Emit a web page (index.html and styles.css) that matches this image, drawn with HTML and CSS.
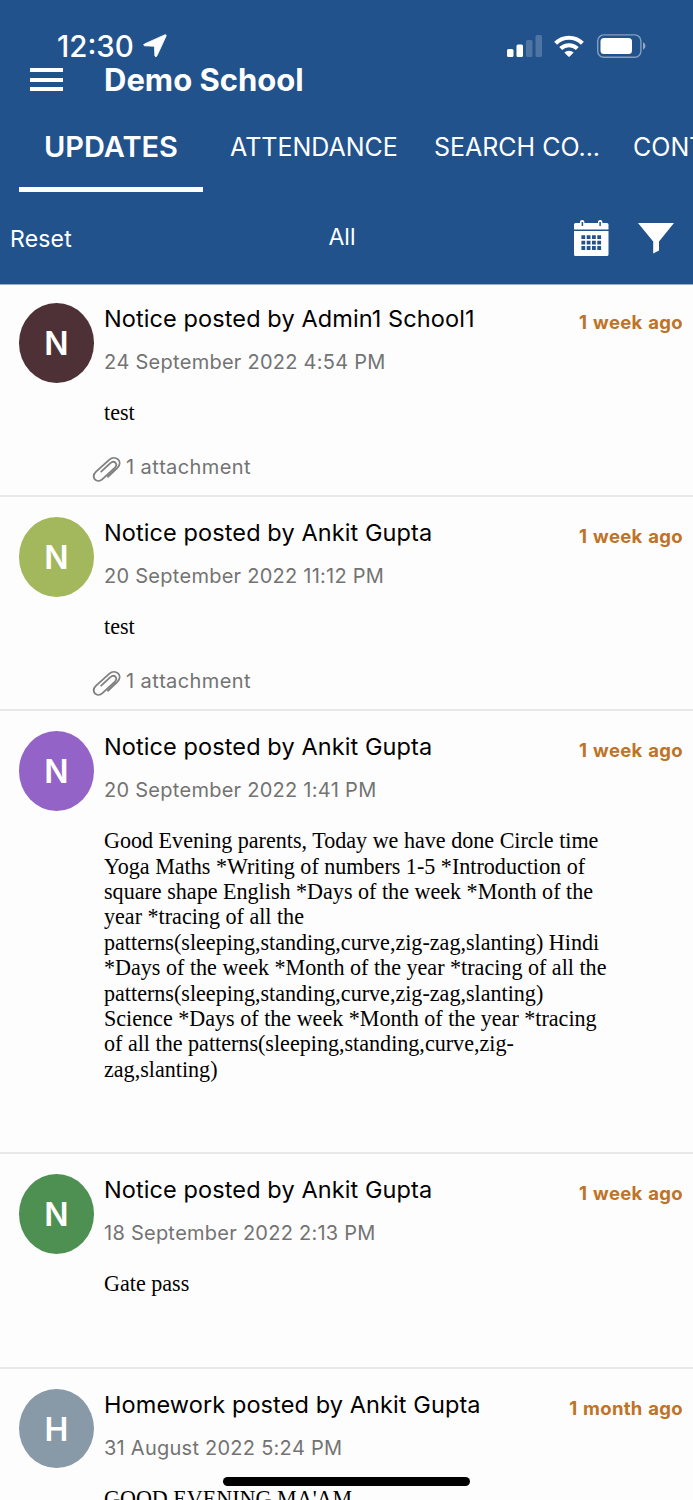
FILE: index.html
```html
<!DOCTYPE html>
<html>
<head>
  <meta charset="utf-8">
  <meta name="viewport" content="width=device-width, initial-scale=1">
  <title>Demo School</title>
  <link rel="stylesheet" href="styles.css">
</head>
<body>
  <svg width="0" height="0" class="defs">
    <symbol id="clip" viewBox="0 0 30 28">
      <g fill="none" stroke="#808080" stroke-width="1.9" stroke-linecap="round">
        <path d="M16.500 21.500L26.300 12.300C29.500 9 29 5.500 27 3.500C24.500 1.300 20.800 1.300 18 3.800L4.200 16.200C1.500 18.800 1.200 22 3 24.300C5 26.500 8.300 26.200 10.800 24L23.500 12.300C25.500 10.300 25.500 8.300 24.300 7C23 5.700 20.800 5.900 19 7.400L9.500 16.200"/>
      </g>
    </symbol>
  </svg>

  <header>
    <div class="status-bar">
      <div class="clock">
        <span class="time">12:30</span>
        <svg width="24" height="24" viewBox="0 0 24 24"><path fill="#fff" stroke="#fff" stroke-width=".8" stroke-linejoin="round" d="M21.600.900Q23.700.100 23 2.200L14 21.800Q12.800 23.800 11.900 22L11.500 13.300Q11.400 12.300 10.400 12.200L1.600 11.800Q-.300 11 1.400 10Z"/></svg>
      </div>
      <div class="status-icons">
        <svg width="35" height="22" viewBox="0 0 35 22">
          <g fill="#fff">
            <rect x="0" y="14" width="6.500" height="8" rx="1.500"/>
            <rect x="9.500" y="9.500" width="6.500" height="12.500" rx="1.500"/>
            <rect x="19" y="5" width="6.500" height="17" rx="1.500" opacity=".2"/>
            <rect x="28.500" y="0" width="6.500" height="22" rx="1.500" opacity=".2"/>
          </g>
        </svg>
        <svg class="wifi" width="30" height="22" viewBox="0 0 30 22">
          <g fill="none" stroke="#fff" stroke-width="4.200">
            <path d="M1.600 8.200A19.200 19.200 0 0 1 28.400 8.200"/>
            <path d="M6.700 13.600A12 12 0 0 1 23.300 13.600"/>
          </g>
          <path fill="#fff" d="M10.300 17.500A7 7 0 0 1 19.700 17.500L15.700 21.500Q15 22.200 14.300 21.500Z"/>
        </svg>
        <svg width="50" height="24" viewBox="0 0 50 24">
          <rect x=".700" y=".900" width="43.200" height="22.400" rx="6" fill="none" stroke="#fff" stroke-width="1.400" opacity=".45"/>
          <rect x="3.500" y="4" width="31.500" height="16" rx="3.500" fill="#fff"/>
          <path d="M46 8.300Q48.500 9.500 48.500 12T46 15.700Z" fill="#fff" opacity=".5"/>
        </svg>
      </div>
    </div>

    <div class="title-bar">
      <div class="menu"><span></span><span></span><span></span></div>
      <h1>Demo School</h1>
    </div>

    <nav>
      <ul>
        <li class="current"><a>UPDATES</a></li>
        <li><a>ATTENDANCE</a></li>
        <li><a>SEARCH CO...</a></li>
        <li class="last"><a>CONTACT...</a></li>
      </ul>
    </nav>

    <div class="filter-bar">
      <span class="reset">Reset</span>
      <span class="all">All</span>
      <div class="tools">
        <svg width="35" height="37" viewBox="0 0 35 37">
          <path fill="#fff" d="M1.500 3H6V2Q6 0 8.200 0T10.400 2V3H24V2Q24 0 26.200 0T28.400 2V3H33Q34.500 3 34.500 4.500V9.500H0V4.500Q0 3 1.500 3ZM0 11H34.500V34.500Q34.500 36 33 36H1.500Q0 36 0 34.500Z"/>
          <g stroke="#21528c" stroke-width="1.500"><path d="M8.400 2V6M26.100 2V6"/></g>
          <g stroke="#21528c" stroke-width="3.800" stroke-dasharray="3.800 1.500"><path d="M7.400 17.200H27.100M7.400 22.600H27.100M7.400 28H27.100"/></g>
        </svg>
        <svg class="funnel" width="36" height="31" viewBox="0 0 36 31"><path fill="#fff" d="M0 0H36L21 18.500V27.500L15.200 30.500V18.500Z"/></svg>
      </div>
    </div>
  </header>

  <main>
    <article>
      <div class="avatar maroon">N</div>
      <div class="content">
        <div class="head"><h2>Notice posted by Admin1 School1</h2><span class="ago">1 week ago</span></div>
        <p class="date">24 September 2022 4:54 PM</p>
        <p class="text">test</p>
        <p class="attachment"><svg width="29" height="27"><use href="#clip"/></svg>1 attachment</p>
      </div>
    </article>
    <article>
      <div class="avatar lime">N</div>
      <div class="content">
        <div class="head"><h2>Notice posted by Ankit Gupta</h2><span class="ago">1 week ago</span></div>
        <p class="date">20 September 2022 11:12 PM</p>
        <p class="text">test</p>
        <p class="attachment"><svg width="29" height="27"><use href="#clip"/></svg>1 attachment</p>
      </div>
    </article>
    <article class="long">
      <div class="avatar purple">N</div>
      <div class="content">
        <div class="head"><h2>Notice posted by Ankit Gupta</h2><span class="ago">1 week ago</span></div>
        <p class="date">20 September 2022 1:41 PM</p>
        <p class="text">Good Evening parents, Today we have done Circle time Yoga Maths *Writing of numbers 1-5 *Introduction of square shape English *Days of the week *Month of the year *tracing of all the patterns(sleeping,standing,curve,zig-zag,slanting) Hindi *Days of the week *Month of the year *tracing of all the patterns(sleeping,standing,curve,zig-zag,slanting) Science *Days of the week *Month of the year *tracing of all the patterns(sleeping,standing,curve,zig-zag,slanting)</p>
      </div>
    </article>
    <article>
      <div class="avatar green">N</div>
      <div class="content">
        <div class="head"><h2>Notice posted by Ankit Gupta</h2><span class="ago">1 week ago</span></div>
        <p class="date">18 September 2022 2:13 PM</p>
        <p class="text">Gate pass</p>
      </div>
    </article>
    <article>
      <div class="avatar slate">H</div>
      <div class="content">
        <div class="head"><h2>Homework posted by Ankit Gupta</h2><span class="ago">1 month ago</span></div>
        <p class="date">31 August 2022 5:24 PM</p>
        <p class="text">GOOD EVENING MA'AM</p>
      </div>
    </article>
  </main>

  <div class="home-indicator"></div>
</body>
</html>
```
FILE: styles.css
```css
* {
  box-sizing: border-box;
}
body {
  font-family: Inter, "Liberation Sans", sans-serif;
  margin: 0;
  height: 1500px;
  overflow: hidden;
  background-color: #fdfdfd;
  position: relative;
}
h1, h2, p, ul {
  margin: 0;
  padding: 0;
  font-weight: 400;
}
svg {
  display: block;
  flex-shrink: 0;
}
.defs {
  position: absolute;
}

/* header */
header {
  background-color: #21528c;
  color: #fff;
  height: 285px;
  border-bottom: 1px solid #9aabc9;
  overflow: hidden;
}
.status-bar {
  height: 63px;
  padding: 28px 46px 0 57px;
  display: flex;
  justify-content: space-between;
}
.clock, .status-icons {
  display: flex;
  align-items: center;
  height: 36px;
}
.time {
  font-size: 29.500px;
  font-weight: 500;
  width: 86px;
  white-space: nowrap;
}
.wifi {
  margin: 0 13px 0 12px;
}
.title-bar {
  height: 33px;
  display: flex;
  align-items: center;
  padding-left: 30px;
}
.menu {
  width: 33px;
  height: 23px;
  margin-right: 41px;
  display: flex;
  flex-direction: column;
  justify-content: space-between;
}
.menu span {
  height: 4px;
  background-color: #fff;
}
h1 {
  font-size: 31px;
  font-weight: 700;
  line-height: 33px;
}
nav ul {
  list-style-type: none;
  display: flex;
  gap: 19px;
  padding: 26px 0 0 19px;
}
nav li {
  flex: 0 0 184px;
  height: 70px;
  line-height: 51px;
  text-align: center;
  font-size: 25px;
  white-space: nowrap;
}
nav .current {
  border-bottom: 5px solid #fff;
  font-size: 29px;
  font-weight: 600;
  line-height: 49px;
}
nav .last {
  padding-left: 5px;
  text-align: left;
}
.filter-bar {
  height: 93px;
  padding: 0 19px 0 10px;
  display: grid;
  grid-template-columns: 1fr auto 1fr;
  align-items: center;
  font-size: 23px;
}
.reset {
  letter-spacing: .2px;
  padding-top: 1px;
}
.all {
  padding-bottom: 3px;
}
.tools {
  display: flex;
  align-items: center;
  justify-content: flex-end;
}
.funnel {
  margin-left: 29px;
}

/* list of posts */
article {
  display: flex;
  height: 214.200px;
  padding: 20px 10px 0 19px;
  border-bottom: 2px solid #e8e8e8;
}
article:first-child {
  height: 212px;
  padding-top: 18px;
}
article.long {
  height: 443.200px;
}
.avatar {
  flex: 0 0 75px;
  height: 79.500px;
  margin-right: 10px;
  border-radius: 50%;
  color: #fff;
  font-size: 32px;
  font-weight: 600;
  line-height: 81px;
  text-align: center;
}
.maroon {
  background-color: #4d3136;
}
.lime {
  background-color: #a3b85d;
}
.purple {
  background-color: #9363c8;
}
.green {
  background-color: #4d9052;
}
.slate {
  background-color: #8899a8;
}
.content {
  flex: 1;
  padding-top: 1px;
}
.head {
  display: flex;
  justify-content: space-between;
  height: 30px;
  line-height: 30px;
}
h2 {
  font-size: 23.500px;
  letter-spacing: .1px;
}
.ago {
  color: #bf7326;
  font-size: 18.500px;
  font-weight: 700;
  line-height: 36px;
  letter-spacing: .3px;
  word-spacing: 1px;
  font-kerning: none;
}
.date {
  margin-top: 13px;
  color: #737373;
  font-size: 20px;
  line-height: 30px;
  letter-spacing: .25px;
  font-kerning: none;
}
.text {
  width: 508px;
  margin-top: 23px;
  font-family: "Liberation Serif", serif;
  font-size: 22.100px;
  line-height: 25.400px;
}
.attachment {
  display: flex;
  align-items: center;
  margin: 26px 0 0 -12px;
  color: #737373;
  font-size: 20px;
  line-height: 30px;
  letter-spacing: .4px;
  font-kerning: none;
}
.attachment svg {
  margin: 5px 5px 0 0;
}

.home-indicator {
  position: absolute;
  left: 223px;
  top: 1476.500px;
  width: 247px;
  height: 9px;
  border-radius: 5px;
  background-color: #000;
}
```
